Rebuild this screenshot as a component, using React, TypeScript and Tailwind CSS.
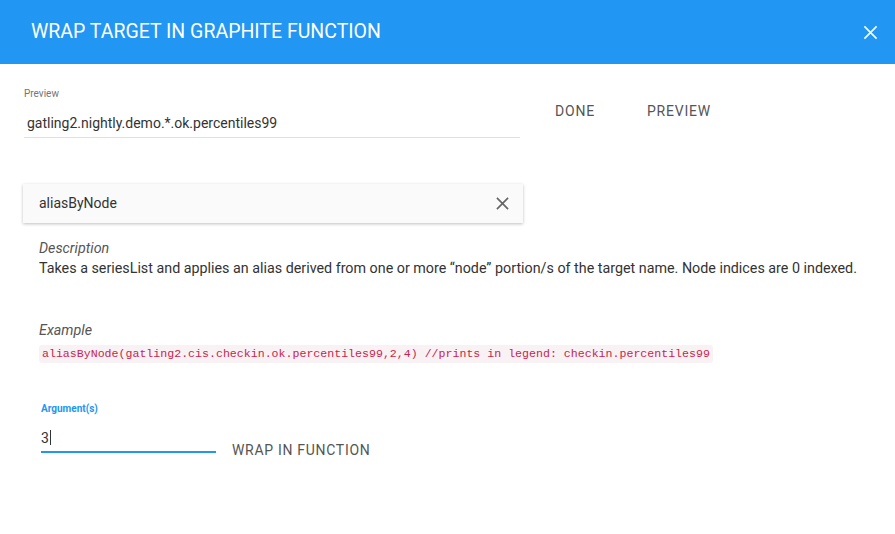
import React from 'react';

export default function App() {
  return (
    <div className="w-[895px] h-[534px] bg-white overflow-hidden" style={{ fontFamily: 'Roboto, "Liberation Sans", sans-serif' }}>
      {/* Header */}
      <div className="h-16 bg-[#2196f3] flex items-center justify-between pl-[31px] pr-[13px]">
        <h1 className="text-white text-[19.5px] font-normal">WRAP TARGET IN GRAPHITE FUNCTION</h1>
        <button className="text-white w-6 h-6 flex items-center justify-center">
          <svg width="15" height="15" viewBox="0 0 16 16" fill="none" stroke="currentColor" strokeWidth="1.7">
            <path d="M1.5 1.5L14.5 14.5M14.5 1.5L1.5 14.5" />
          </svg>
        </button>
      </div>

      {/* Preview row */}
      <div className="flex items-start pl-6 pt-[25px]">
        <div className="w-[496px]">
          <div className="text-[10px] text-[#757575] leading-none">Preview</div>
          <div className="mt-[17px] text-[14px] text-[#333] pl-[3px] leading-none pb-[7px] border-b border-[#e0e0e0]">
            gatling2.nightly.demo.*.ok.percentiles99
          </div>
        </div>
        <div className="flex gap-[52px] ml-[35px] mt-[12px] text-[14px] text-[#555] tracking-[0.8px]">
          <span>DONE</span>
          <span>PREVIEW</span>
        </div>
      </div>

      {/* Function card */}
      <div className="ml-[23px] mt-[46px] w-[500px] h-[39px] bg-[#fafafa] shadow-[0_1px_3px_rgba(0,0,0,0.25)] flex items-center justify-between pl-4 pr-[14px]">
        <span className="text-[14px] text-[#333]">aliasByNode</span>
        <svg width="13" height="13" viewBox="0 0 14 14" fill="none" stroke="#666" strokeWidth="1.8">
          <path d="M1 1L13 13M13 1L1 13" />
        </svg>
      </div>

      {/* Description */}
      <div className="pl-[39px] pt-[15px]">
        <div className="text-[14.3px] italic text-[#555] leading-5">Description</div>
        <div className="text-[14.3px] text-[#333] leading-5">
          Takes a seriesList and applies an alias derived from one or more “node” portion/s of the target name. Node indices are 0 indexed.
        </div>

        <div className="mt-[42px] text-[14.3px] italic text-[#555] leading-5">Example</div>
        <code className="inline-block mt-[1px] px-[3px] py-[1px] bg-[#f9f2f4] text-[#c7254e] text-[11.6px] rounded-[3px] leading-4" style={{ fontFamily: '"Liberation Mono", monospace' }}>
          aliasByNode(gatling2.cis.checkin.ok.percentiles99,2,4) //prints in legend: checkin.percentiles99
        </code>
      </div>

      {/* Arguments */}
      <div className="pl-[41px] pt-[40px] flex items-end">
        <div className="w-[175px]">
          <div className="text-[10px] font-bold text-[#2196f3] leading-none">Argument(s)</div>
          <div className="mt-[16px] text-[14px] text-[#333] leading-none pb-[6px] border-b-2 border-[#2196f3] flex items-center">
            <span>3</span>
            <span className="inline-block w-px h-[15px] bg-[#333] ml-px" />
          </div>
        </div>
        <span className="ml-[16px] text-[14px] text-[#555] tracking-[0.7px] -mb-[8px]">WRAP IN FUNCTION</span>
      </div>
    </div>
  );
}
